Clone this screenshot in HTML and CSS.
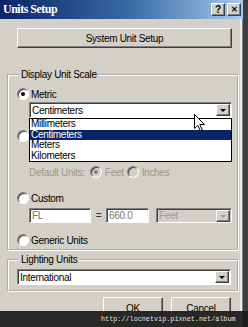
FILE: index.html
```html
<!DOCTYPE html>
<html>
<head>
  <title>Units Setup</title>
  <link rel="stylesheet" href="styles.css">
</head>
<body>

<div class="screen">
  <div class="window">
    <div class="titlebar">
      <span class="title">Units Setup</span>
      <span class="cbtn">?</span>
      <span class="cbtn close">&#x2715;</span>
    </div>

    <div class="content">
      <div class="sys-row"><button class="btn sys-btn">System Unit Setup</button></div>

      <fieldset class="group scale">
        <legend>Display Unit Scale</legend>

        <div class="radio-row first"><span class="radio on"></span>Metric</div>
        <div class="combo-wrap">
          <div class="combo metric"><span class="val">Centimeters</span><span class="arrow"></span></div>
          <ul class="droplist">
            <li>Millimeters</li>
            <li class="sel">Centimeters</li>
            <li>Meters</li>
            <li>Kilometers</li>
          </ul>
          <svg class="pointer" width="12" height="18" viewBox="0 0 12 18">
            <path d="M0.5 0.5 L0.5 14.5 L3.8 11.3 L6.3 17 L8.3 16.1 L5.9 10.5 L10.5 10.5 Z" fill="#fff" stroke="#000" stroke-width="1"/>
          </svg>
        </div>

        <!-- imperial row sits under the open list -->
        <div class="radio-row imperial"><span class="radio"></span></div>
        <div class="combo metric under"><span class="val"></span><span class="arrow"></span></div>

        <div class="default-units">
          <span>Default Units:</span>
          <span class="radio on off"></span><span>Feet</span>
          <span class="radio off"></span><span>Inches</span>
        </div>

        <div class="radio-row custom"><span class="radio"></span>Custom</div>
        <div class="custom-row">
          <div class="field fl">FL</div>
          <span class="eq">=</span>
          <div class="field num">660.0</div>
          <div class="combo feet disabled"><span class="val">Feet</span><span class="arrow"></span></div>
        </div>

        <div class="radio-row generic"><span class="radio"></span>Generic Units</div>
      </fieldset>

      <fieldset class="group lighting">
        <legend>Lighting Units</legend>
        <div class="combo intl"><span class="val">International</span><span class="arrow"></span></div>
      </fieldset>

      <div class="actions">
        <button class="btn act">OK</button>
        <button class="btn act">Cancel</button>
      </div>
    </div>
  </div>

  <div class="watermark">http://locnetvip.pixnet.net/album</div>
</div>

</body>
</html>
```

FILE: styles.css
```css
body {
  margin: 0;
  font-family: "Liberation Sans", Arial, sans-serif;
  font-size: 10px;
  letter-spacing: -0.3px;
  color: #000;
}
.screen {
  position: relative;
  width: 248px;
  height: 327px;
  overflow: hidden;
  display: flex;
  background: #3e3e3e;
}
.window {
  width: 243px;
  height: 327px;
  background: #d4d0c8;
  box-shadow: inset -1px 0 #808080, inset -3px 0 #ecebe6;
}

/* title bar */
.titlebar {
  height: 19px;
  display: flex;
  align-items: center;
  gap: 2px;
  padding: 0 2px 0 3px;
  background: linear-gradient(to right, #0a246a 0%, #3a6ea5 55%, #a6caf0 100%);
}
.title {
  flex: 1;
  color: #fff;
  font-family: "Liberation Serif", serif;
  font-weight: bold;
  font-size: 12px;
  letter-spacing: -0.5px;
}
.cbtn {
  width: 12px;
  height: 11px;
  display: flex;
  align-items: center;
  justify-content: center;
  background: #d4d0c8;
  border: 1px solid;
  border-color: #fff #404040 #404040 #fff;
  box-shadow: inset -1px -1px #808080;
  font-family: "Liberation Sans", sans-serif;
  font-weight: bold;
  font-size: 10px;
  letter-spacing: 0;
  line-height: 1;
}
.cbtn.close {
  font-size: 8px;
}

/* buttons */
.btn {
  font: inherit;
  letter-spacing: inherit;
  color: #000;
  background: #d4d0c8;
  border: 1px solid;
  border-color: #fff #404040 #404040 #fff;
  box-shadow: inset -1px -1px #808080;
  padding: 0;
}
.content {
  padding-top: 9px;
}
.sys-row {
  padding-left: 17px;
}
.sys-btn {
  width: 215px;
  height: 20px;
}

/* group boxes */
.group {
  margin: 0 4px 0 7px;
  width: 232px;
  box-sizing: border-box;
  border: 2px groove #fff;
  padding: 0 5px 3px 8px;
}
.group legend {
  margin-left: 2px;
  padding: 0 2px;
  line-height: 12px;
}
.scale {
  margin-top: 21px;
}
.lighting {
  margin-top: 3px;
  padding-bottom: 5px;
}

/* radio buttons */
.radio-row {
  display: flex;
  align-items: center;
  gap: 2px;
  height: 12px;
}
.radio {
  width: 12px;
  height: 12px;
  box-sizing: border-box;
  border-radius: 50%;
  background: #fff;
  border: 1px solid;
  border-color: #808080 #fff #fff #808080;
  box-shadow: inset 1px 1px #404040;
  display: inline-flex;
  align-items: center;
  justify-content: center;
  flex: none;
}
.radio.on::after {
  content: "";
  width: 4px;
  height: 4px;
  border-radius: 50%;
  background: #000;
}
.radio.off {
  background: #d4d0c8;
}
.radio.off.on::after {
  background: #808080;
}
.first {
  margin-top: 7px;
}
.imperial {
  margin-top: 12px;
}
.custom {
  margin-top: 14px;
}
.generic {
  margin-top: 11px;
}

/* combo boxes */
.combo {
  height: 16px;
  box-sizing: border-box;
  display: flex;
  align-items: center;
  background: #fff;
  border: 1px solid;
  border-color: #808080 #fff #fff #808080;
  box-shadow: inset 1px 1px #404040;
}
.combo .val {
  flex: 1;
  padding-left: 2px;
  white-space: nowrap;
  overflow: hidden;
}
.combo .arrow {
  width: 14px;
  height: 12px;
  margin-right: 1px;
  box-sizing: border-box;
  background: #d4d0c8;
  border: 1px solid;
  border-color: #fff #404040 #404040 #fff;
  box-shadow: inset -1px -1px #808080;
  display: flex;
  align-items: center;
  justify-content: center;
}
.combo .arrow::after {
  content: "";
  border-left: 3px solid transparent;
  border-right: 3px solid transparent;
  border-top: 3px solid #000;
  margin-top: 1px;
}
.combo-wrap {
  position: relative;
  margin: 2px 0 0 12px;
  width: 203px;
}
.metric {
  width: 203px;
}
.under {
  margin: 4px 0 0 12px;
}
.droplist {
  position: absolute;
  top: 100%;
  left: 0;
  z-index: 2;
  width: 203px;
  height: 44px;
  box-sizing: border-box;
  margin: 0;
  padding: 0;
  list-style: none;
  background: #fff;
  border: 1px solid #000;
}
.droplist li {
  height: 10.5px;
  line-height: 10.5px;
  padding-left: 1px;
}
.droplist li.sel {
  background: #0a246a;
  color: #fff;
}
.pointer {
  position: absolute;
  left: 165px;
  top: 12px;
  z-index: 3;
}

.default-units {
  display: flex;
  align-items: center;
  gap: 3px;
  height: 12px;
  margin: 4px 0 0 12px;
  color: #9a978f;
}
.default-units span:first-child {
  margin-right: 2px;
}

.custom-row {
  display: flex;
  align-items: center;
  height: 15px;
  margin: 4px 0 0 12px;
}
.field {
  height: 15px;
  box-sizing: border-box;
  background: #fff;
  border: 1px solid;
  border-color: #808080 #fff #fff #808080;
  box-shadow: inset 1px 1px #404040;
  padding: 1px 0 0 2px;
  color: #777;
}
.fl {
  width: 62px;
}
.eq {
  width: 15px;
  text-align: center;
  color: #333;
}
.num {
  width: 43px;
}
.feet {
  width: 76px;
  height: 15px;
  margin-left: 7px;
}
.combo.disabled {
  background: #d4d0c8;
  color: #a09d96;
}
.combo.disabled .arrow::after {
  border-top-color: #a09d96;
}

.intl {
  width: 214px;
  margin-top: 3px;
}

.actions {
  display: flex;
  gap: 8px;
  padding: 5px 0 0 103px;
}
.act {
  width: 60px;
  height: 22px;
}

.watermark {
  position: absolute;
  left: 0;
  right: 0;
  bottom: 0;
  height: 16px;
  background: rgba(25, 25, 25, 0.92);
  color: #e6e6e6;
  font-family: "Liberation Mono", monospace;
  font-size: 6.8px;
  letter-spacing: 0;
  line-height: 16px;
  padding-left: 101px;
}
```
